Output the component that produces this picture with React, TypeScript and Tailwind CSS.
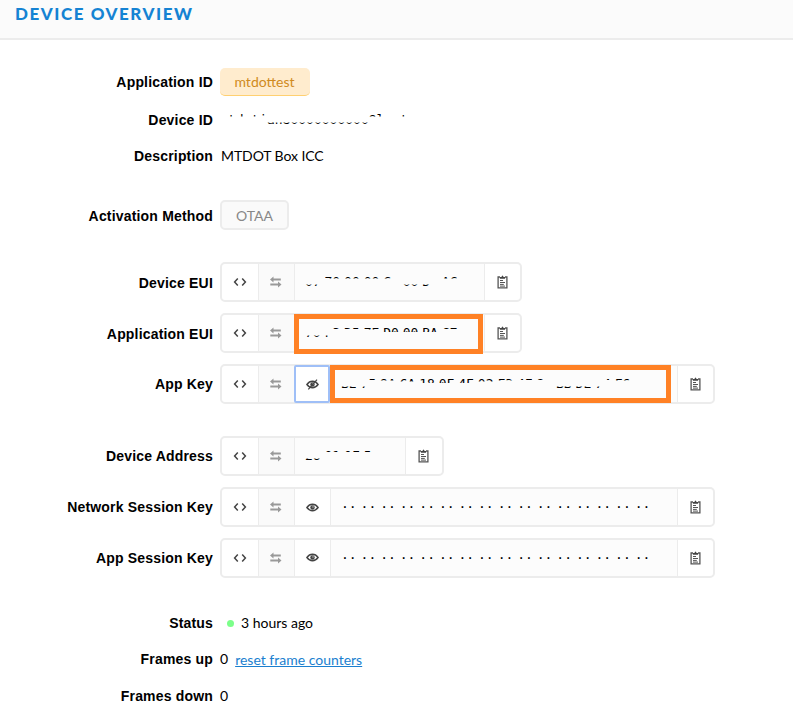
import React from "react";

type Piece = { t: string; show?: "top1" | "top2" | "top3" | "top5" | "bottom"; gap?: boolean };

const clips = {
  top1: "[clip-path:inset(0_0_12px_0)]",
  top2: "[clip-path:inset(0_0_11.5px_0)]",
  top3: "[clip-path:inset(0_0_10.5px_0)]",
  top5: "[clip-path:inset(0_0_9px_0)]",
  bottom: "[clip-path:inset(10.5px_0_0_0)]",
};

const mono = "font-['DejaVu_Sans_Mono','Liberation_Mono',monospace] text-[13px] leading-4";

function Redacted({ pieces }: { pieces: Piece[] }) {
  return (
    <span className={`flex whitespace-pre text-black ${mono}`}>
      {pieces.map((p, i) => (
        <span key={i} className={`block h-4 ${p.gap === false ? "" : "mr-[3.9px]"} ${p.show ? clips[p.show] : "invisible"}`}>
          {p.t}
        </span>
      ))}
    </span>
  );
}

const n = false;
const deviceId: Piece[] = [
  { t: "m", gap: n }, { t: "tdoti", show: "top2", gap: n }, { t: "an80000000000", show: "bottom", gap: n },
  { t: "9l", show: "top2", gap: n }, { t: "  ", gap: n }, { t: "t", show: "top2", gap: n },
];
const deviceEui: Piece[] = [
  { t: "07", show: "bottom" }, { t: "70", show: "top2" }, { t: "00", show: "top2" }, { t: "00", show: "top2" },
  { t: "C", show: "top2", gap: n }, { t: "0" }, { t: "00", show: "bottom" }, { t: "D", show: "bottom", gap: n }, { t: "0" }, { t: "AC", show: "top2" },
];
const appEui: Piece[] = [
  { t: "70", show: "bottom" }, { t: "F", show: "bottom", gap: n }, { t: "3", show: "top1" }, { t: "D5", show: "top1" },
  { t: "7E", show: "top2" }, { t: "D0", show: "top5" }, { t: "00", show: "top5" }, { t: "BA", show: "top5" }, { t: "C7", show: "top1" },
];
const appKey: Piece[] = [
  { t: "BE", show: "bottom" }, { t: "7", show: "bottom", gap: n }, { t: "5", show: "top1" }, { t: "9A", show: "top2" },
  { t: "6A", show: "top3" }, { t: "18", show: "top5" }, { t: "0F", show: "top5" }, { t: "4F", show: "top5" },
  { t: "02", show: "top3" }, { t: "F3", show: "top2" }, { t: "4F", show: "top1" }, { t: "8", show: "top1", gap: n }, { t: "0" },
  { t: "BB", show: "bottom" }, { t: "DE", show: "bottom" }, { t: "7", show: "bottom", gap: n }, { t: "4", show: "top1" }, { t: "F6", show: "top2" },
];
const address: Piece[] = [
  { t: "26", show: "bottom" }, { t: "01", show: "top1" }, { t: "0F", show: "top1" }, { t: "5", show: "top1" },
];

function CodeIcon() {
  return (
    <svg width="14" height="10" viewBox="0 0 14 10" fill="none" stroke="#444" strokeWidth="1.5">
      <path d="M4.8 1.5 1.6 5 4.8 8.5M9.2 1.5 12.4 5 9.2 8.5" />
    </svg>
  );
}
function SwapIcon() {
  return (
    <svg className="-ml-px" width="12" height="12" viewBox="0 0 12 12" fill="#999">
      <path d="M0 3.5 3.5.6V2.5h7.3v2H3.5v1.9zM11.5 8.5 8 5.6v1.9H.3v2H8v1.9z" />
    </svg>
  );
}
function EyeIcon({ off = false }: { off?: boolean }) {
  return (
    <svg width="13" height="11" viewBox="0 0 13 11" fill="none" stroke="#444">
      <path d="M.9 5.5Q3.2 2.3 6.5 2.3T12.1 5.5Q9.8 8.7 6.5 8.7T.9 5.5Z" strokeWidth="1.4" />
      <circle cx="6.5" cy="5.5" r="2.2" fill="#444" stroke="none" />
      <circle cx="7" cy="4.9" r=".7" fill="#ddd" stroke="none" />
      {off && <path d="M2.3 10.3 11 .7" strokeWidth="1.2" />}
    </svg>
  );
}
function ClipboardIcon() {
  return (
    <svg className="-ml-px" width="11" height="14" viewBox="0 0 11 14" fill="none" stroke="#555">
      <path d="M3 2H1.1v10.9h8.8V2H8" strokeWidth="1.3" />
      <path d="M2.9 3.8V2h1.6Q4.8.4 5.5.4T6.5 2h1.6v1.8z" fill="#444" stroke="none" />
      <path d="M3 5.5h3M3 7.5h5M3 9.4h3.8M3 11.1h5" />
    </svg>
  );
}

function Row({ label, className, low, children }: { label: string; className: string; low?: boolean; children: React.ReactNode }) {
  return (
    <div className={`flex items-center ${className}`}>
      <div className={`w-[213px] shrink-0 text-right font-['Liberation_Sans',Arial,sans-serif] text-sm font-bold tracking-[0.18px] ${low ? "pt-0.5" : ""}`}>{label}</div>
      <div className="ml-[7px] flex items-center">{children}</div>
    </div>
  );
}

function Field({ width, children, eye, mark }: { width: string; children: React.ReactNode; eye?: "on" | "off"; mark?: string }) {
  const cell = "flex shrink-0 items-center justify-center border-l border-[#ececec]";
  return (
    <div className="relative flex h-10 rounded-[5px] border-2 border-[#ececec] bg-white">
      <div className="flex w-9 items-center justify-center"><CodeIcon /></div>
      <div className={`${cell} w-9 bg-[#fafafa]`}><SwapIcon /></div>
      {eye === "on" && <div className={`${cell} w-9`}><EyeIcon /></div>}
      {eye === "off" && (
        <div className="-my-px flex w-9 items-center justify-center rounded-xs border-2 border-[#9fbff7]"><EyeIcon off /></div>
      )}
      <div className={`flex items-center border-l border-[#ececec] bg-[#fcfcfc] pl-[10px] ${width}`}>{children}</div>
      <div className={`${cell} ${width === "w-[111px]" ? "w-[37px]" : "w-9"}`}><ClipboardIcon /></div>
      {mark && <div className={`absolute border-5 border-[#ff8125] ${mark}`} />}
    </div>
  );
}

function HiddenKey() {
  return (
    <span className="flex h-4">
      {Array.from({ length: 16 }, (_, i) => (
        <span key={i} className={`mr-[3.93px] text-black ${mono}`}>··</span>
      ))}
    </span>
  );
}

export default function App() {
  return (
    <div className="h-[708px] w-[793px] overflow-hidden bg-white font-[Lato,sans-serif] text-sm text-black">
      <header className="h-10 border-b-2 border-[#ececec] bg-[#fbfbfb] pl-[15px]">
        <h1 className="text-[17px] leading-7 font-black tracking-[1.55px] text-[#1583d3]">DEVICE OVERVIEW</h1>
      </header>
      <main>
        <Row label="Application ID" className="mt-7 h-7">
          <span className="flex h-7 w-[90px] items-center justify-center rounded-[5px] border-b border-[#ffd071] bg-[#ffecce] pr-px text-[#d08a20]">mtdottest</span>
        </Row>
        <Row label="Device ID" className="mt-[10px] h-7"><Redacted pieces={deviceId} /></Row>
        <Row label="Description" className="mt-2 h-7"><span className="tracking-[-0.08px] pl-px">MTDOT Box ICC</span></Row>
        <Row label="Activation Method" low className="mt-[30px] h-[30px]">
          <span className="flex h-[30px] w-[69px] items-center justify-center rounded-[5px] border-2 border-[#ececec] bg-[#fafafa] pt-px text-[#888]">OTAA</span>
        </Row>
        <Row label="Device EUI" low className="mt-8"><Field width="w-[190px]"><Redacted pieces={deviceEui} /></Field></Row>
        <Row label="Application EUI" low className="mt-[11px]">
          <Field width="w-[190px]" mark="left-[72px] -top-px h-10 w-[189px]"><Redacted pieces={appEui} /></Field>
        </Row>
        <Row label="App Key" className="mt-[11px]">
          <Field eye="off" width="w-[347px]" mark="left-[108px] -top-px h-[38px] w-[341px]"><Redacted pieces={appKey} /></Field>
        </Row>
        <Row label="Device Address" className="mt-8"><Field width="w-[111px]"><Redacted pieces={address} /></Field></Row>
        <Row label="Network Session Key" className="mt-[11px]"><Field eye="on" width="w-[347px]"><HiddenKey /></Field></Row>
        <Row label="App Session Key" className="mt-[10.5px]"><Field eye="on" width="w-[347px]"><HiddenKey /></Field></Row>
        <Row label="Status" className="mt-[31.5px] h-7">
          <span className="mr-[7px] ml-[7px] size-[7px] rounded-full bg-[#7cff8a]" />3 hours ago
        </Row>
        <Row label="Frames up" className="mt-2 h-7">
          0<a className="ml-[7px] pt-0.5 text-[#1b7fcf] underline">reset frame counters</a>
        </Row>
        <Row label="Frames down" className="mt-[9px] h-7">0</Row>
      </main>
    </div>
  );
}
